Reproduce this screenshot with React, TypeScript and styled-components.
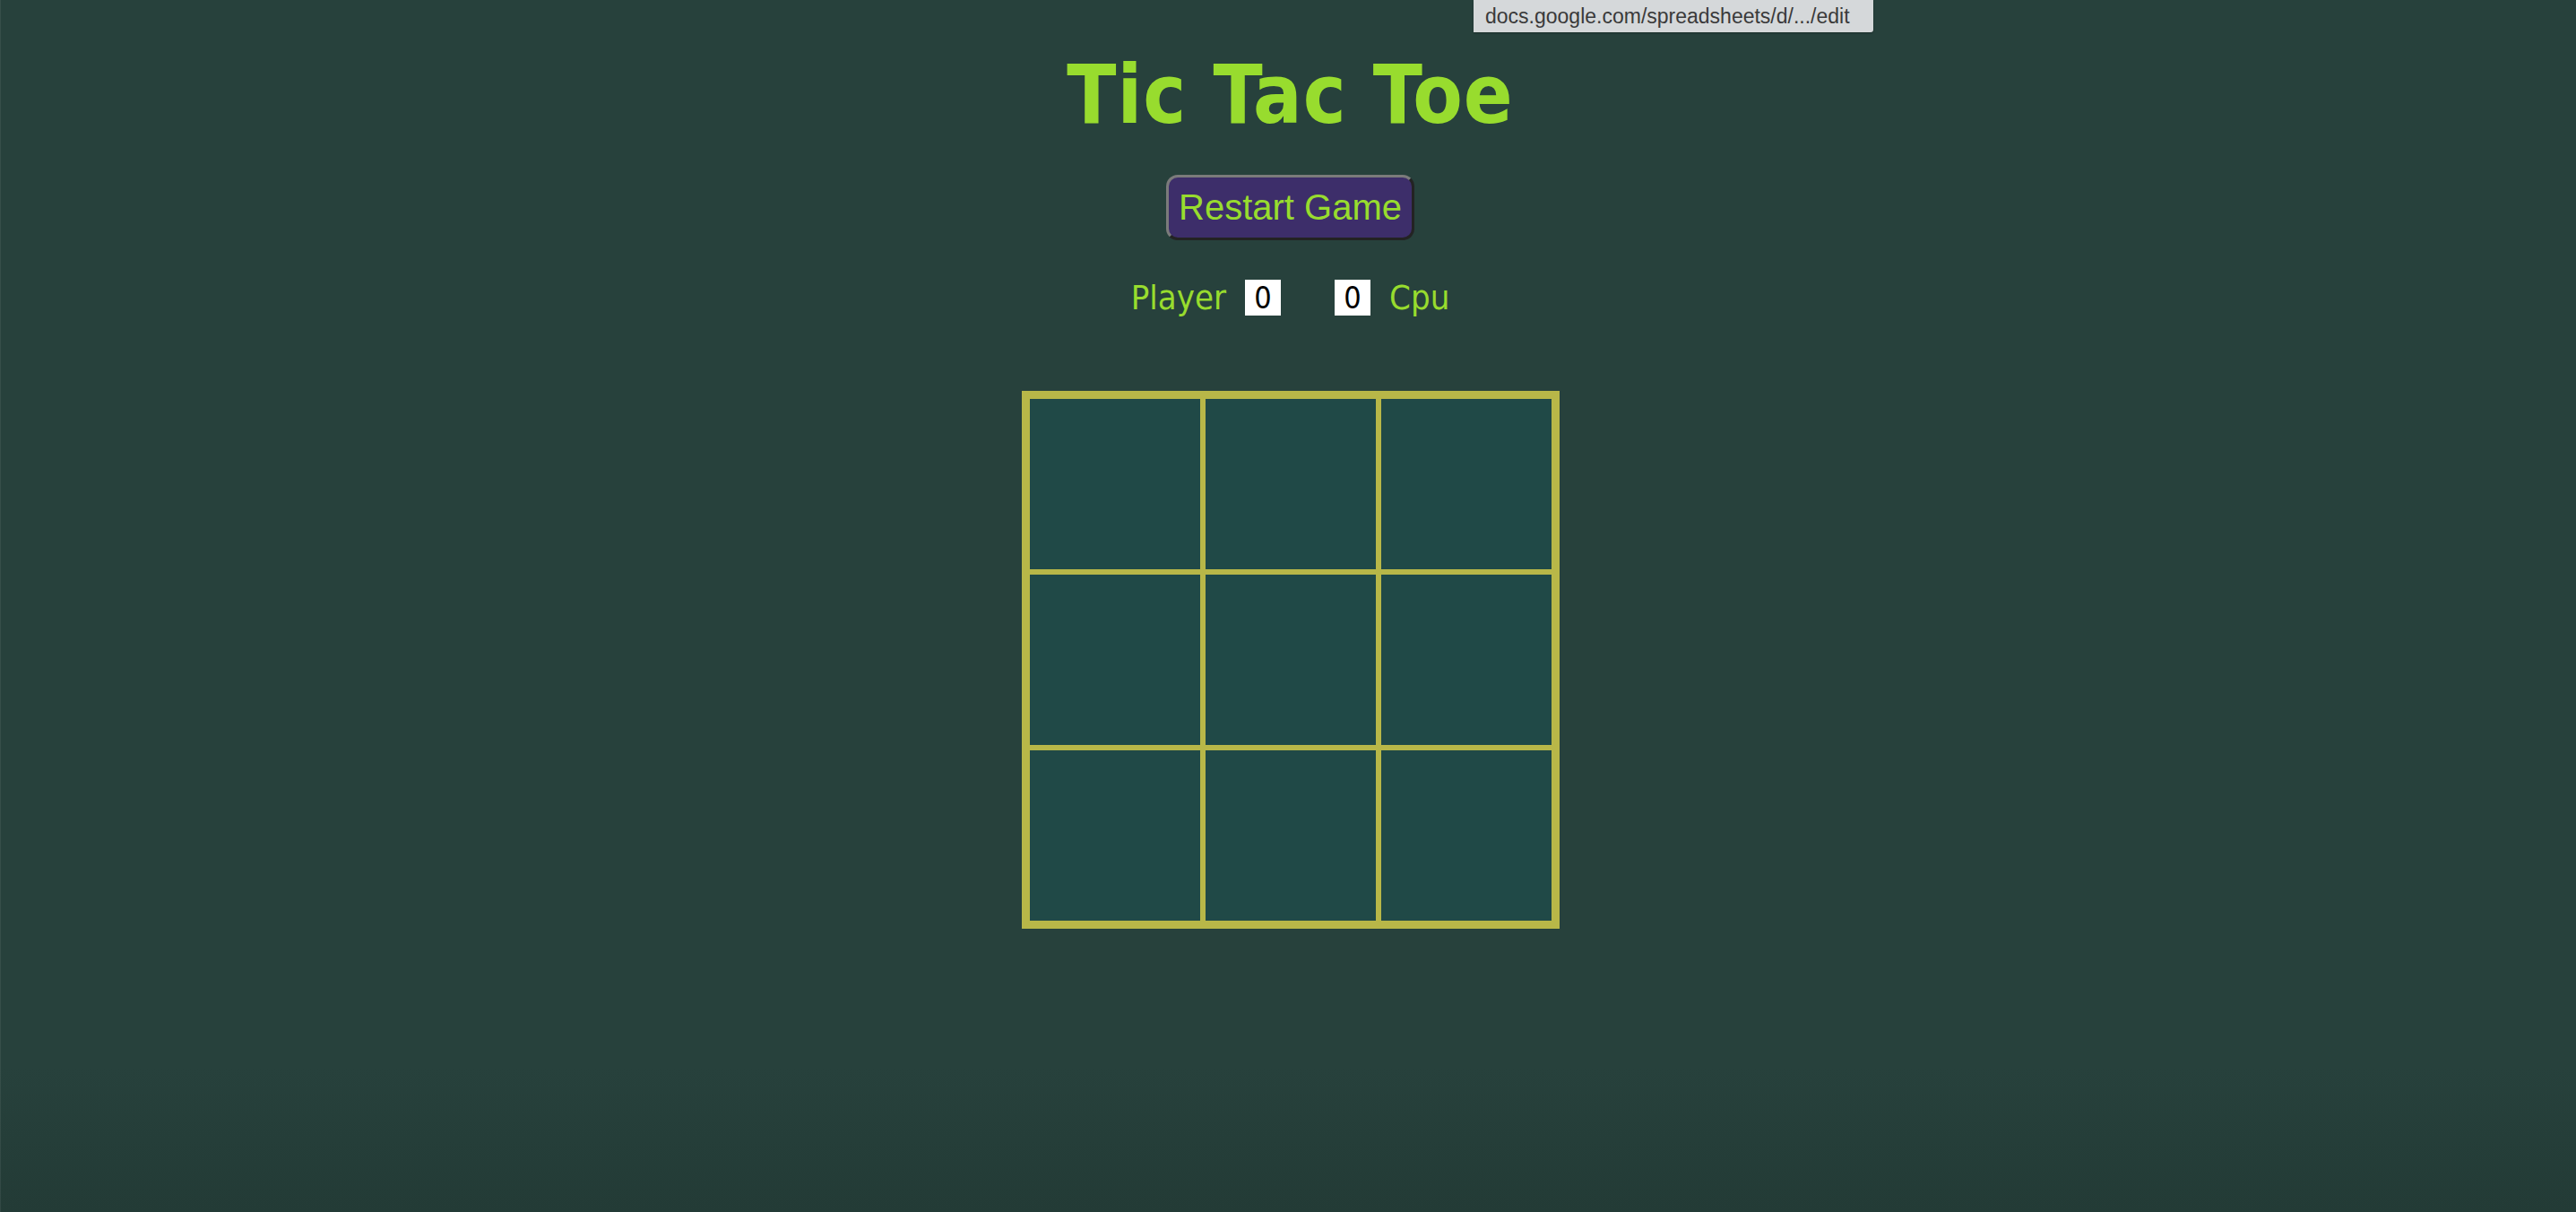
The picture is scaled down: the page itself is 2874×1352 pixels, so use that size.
import React from "react";
import styled, { createGlobalStyle } from "styled-components";

const Global = createGlobalStyle`
  html, body {
    margin: 0;
    padding: 0;
    height: 100%;
  }
  body {
    background: #27413c;
    font-family: "DejaVu Sans Condensed", "DejaVu Sans", sans-serif;
    font-stretch: condensed;
    overflow: hidden;
  }
  #root {
    min-height: 100vh;
  }
`;

const Page = styled.div`
  position: relative;
  min-height: 1352px;
  padding-left: 5px;
  display: flex;
  flex-direction: column;
  align-items: center;
  background: linear-gradient(to bottom, #27413c 0%, #27413c 88%, #233b36 100%);
  box-shadow: inset 1px 0 0 rgba(255, 255, 255, 0.07);
`;

const Title = styled.h1`
  margin: 56px 0 0;
  font-size: 90px;
  line-height: 100px;
  font-weight: bold;
  letter-spacing: 1px;
  color: #98dc2e;
`;

const RestartButton = styled.button`
  margin-top: 39px;
  height: 73px;
  box-sizing: border-box;
  padding: 0 11px;
  display: flex;
  align-items: center;
  justify-content: center;
  font-family: "Liberation Sans", Arial, sans-serif;
  font-stretch: normal;
  font-size: 40px;
  color: #98dc2e;
  background: #3d2e6a;
  border: 3px solid;
  border-color: #7b7b7b #232323 #232323 #7b7b7b;
  border-radius: 13px;
  cursor: pointer;
`;

const ScoreRow = styled.div`
  margin-top: 44px;
  height: 40px;
  display: flex;
  align-items: center;
`;

const Label = styled.span<{ $gapLeft?: number; $gapRight?: number }>`
  font-size: 38px;
  color: #98dc2e;
  margin-left: ${(p) => p.$gapLeft ?? 0}px;
  margin-right: ${(p) => p.$gapRight ?? 0}px;
`;

const ScoreBox = styled.span<{ $gapRight?: number }>`
  width: 40px;
  height: 40px;
  display: flex;
  align-items: center;
  justify-content: center;
  background: #ffffff;
  color: #000000;
  font-size: 34px;
  margin-right: ${(p) => p.$gapRight ?? 0}px;
`;

const Board = styled.div`
  margin-top: 84px;
  display: grid;
  grid-template-columns: repeat(3, 190px);
  grid-template-rows: repeat(3, 190px);
  gap: 6px;
  background: #b8b748;
  border: 9px solid #b8b748;
`;

const Cell = styled.div`
  background: #204947;
  cursor: pointer;
`;

const StatusBubble = styled.div`
  position: absolute;
  top: 0;
  left: 1644px;
  width: 446px;
  height: 36px;
  box-sizing: border-box;
  padding: 0 0 0 13px;
  display: flex;
  align-items: center;
  background: #d5d8da;
  color: #3a3a3a;
  font-family: "Liberation Sans", Arial, sans-serif;
  font-stretch: normal;
  font-size: 23px;
  border-bottom-right-radius: 3px;
  box-shadow: 0 1px 2px rgba(0, 0, 0, 0.3);
`;

export default function App() {
  const cells = Array.from({ length: 9 }, (_, i) => i);
  return (
    <>
      <Global />
      <Page>
        <Title>Tic Tac Toe</Title>
        <RestartButton>Restart Game</RestartButton>
        <ScoreRow>
          <Label $gapRight={21}>Player</Label>
          <ScoreBox $gapRight={60}>0</ScoreBox>
          <ScoreBox>0</ScoreBox>
          <Label $gapLeft={21}>Cpu</Label>
        </ScoreRow>
        <Board>
          {cells.map((i) => (
            <Cell key={i} />
          ))}
        </Board>
        <StatusBubble>docs.google.com/spreadsheets/d/.../edit</StatusBubble>
      </Page>
    </>
  );
}
